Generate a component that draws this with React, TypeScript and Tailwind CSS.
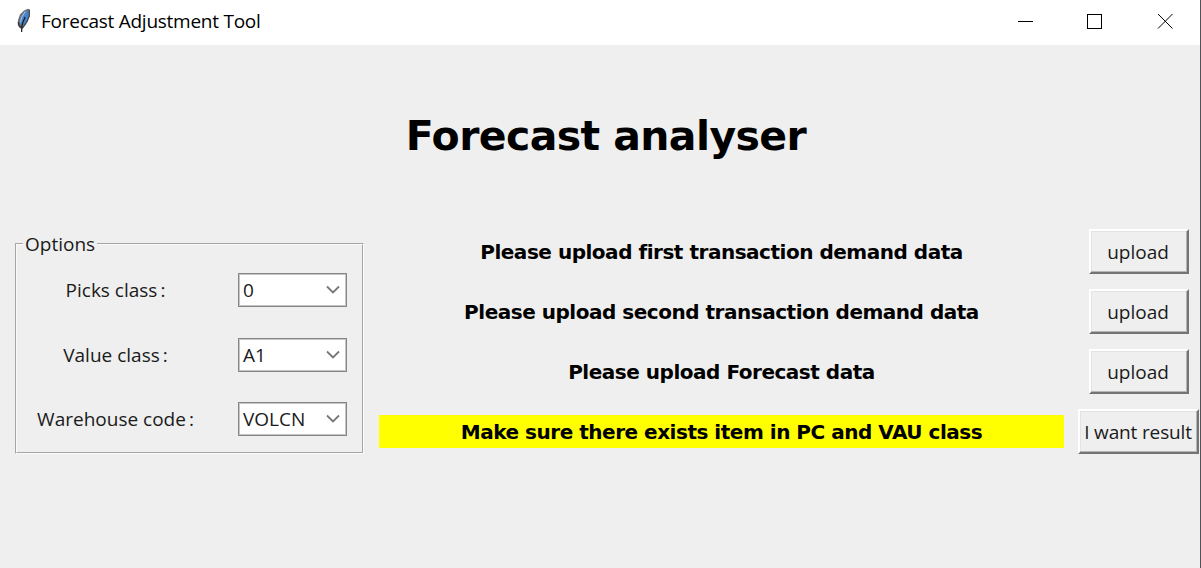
import React from "react";

function Feather() {
  return (
    <svg width="18" height="26" viewBox="0 0 18 26" className="block">
      <path d="M13 0.8 15 1.4 15 8 12.8 13.5 10 18 7.6 20.5 5 20.3 2.8 17 3 12 5 6.5 9 2.4Z" fill="#6b6d70" />
      <path d="M13 2.2 13.8 6 12.6 11 9.6 15.5 7 18 4.8 15 5.6 9.5 9 4.4Z" fill="#4384cf" />
      <path d="M10.5 3.4 6.8 9 5.4 14.5" stroke="#9fb9d6" strokeWidth="1.1" fill="none" />
      <path d="M14.4 2.5 14.2 8 11.6 14 8.8 18" stroke="#3d4147" strokeWidth="1" fill="none" />
      <path d="M10.2 9 8 14 6.9 18 6.6 24" stroke="#15181d" strokeWidth="1.2" fill="none" />
      <path d="M3.2 14 4.2 18 6.8 20.3 8.6 18.5" stroke="#333" strokeWidth="1.2" fill="none" />
    </svg>
  );
}

function TitleBar() {
  return (
    <header className="flex h-[45px] items-start bg-white">
      <div className="ml-[15px] mt-[8px] w-[26px]">
        <Feather />
      </div>
      <h1 className="mt-[8px] flex-1 whitespace-nowrap text-[19px] leading-[26px] tracking-[-0.26px]">Forecast Adjustment Tool</h1>
      <svg width="200" height="45" viewBox="0 0 200 45" className="block" fill="none" stroke="#000">
        <path d="M18 21.5H33" />
        <rect x="87.5" y="14.5" width="14" height="14" />
        <path d="M158 14 172.5 28.5M172.5 14 158 28.5" />
      </svg>
    </header>
  );
}

function OptionRow({ label, value }: { label: string; value: string }) {
  return (
    <div className="flex h-[34px] items-center">
      <div className="w-[197px] whitespace-nowrap text-center text-[19px] leading-[26px] text-[#1a1a1a]">
        {label}
        <span className="ml-[3px]">:</span>
      </div>
      <button className="ml-[24px] flex h-[34px] w-[109px] items-center justify-between border border-[#858585] bg-white pl-[4px] pr-[6px] text-left text-[19px] leading-[26px] text-[#1a1a1a] shadow-[inset_0_0_0_1px_#c6c6c6]">
        <span>{value}</span>
        <svg width="14" height="10" viewBox="0 0 14 10" fill="none" stroke="#777" strokeWidth="1.8">
          <path d="M1 1.5 7 7.5 13 1.5" />
        </svg>
      </button>
    </div>
  );
}

function Message({ text, tone }: { text: string; tone: string }) {
  return (
    <p className={`flex h-[33px] w-[685px] items-center justify-center whitespace-nowrap font-['DejaVu_Sans',sans-serif] text-[20px] font-bold tracking-[-0.48px] ${tone}`}>
      {text}
    </p>
  );
}

function PushButton({ text, size }: { text: string; size: string }) {
  return (
    <button className={`flex h-[45px] items-center justify-center whitespace-nowrap border-2 border-b-[#747474] border-l-white border-r-[#747474] border-t-white pr-px text-[19px] leading-[26px] text-[#1a1a1a] shadow-[inset_-1px_-1px_0_#b5b5b5,inset_1px_1px_0_#e3e3e3] ${size}`}>
      {text}
    </button>
  );
}

export default function App() {
  return (
    <div className="flex h-[568px] w-[1201px] flex-col overflow-hidden border-r border-[#4f5256] bg-[#efefef] font-['Open_Sans','Noto_Sans',sans-serif] text-black">
      <TitleBar />
      <h2 className="mt-[61px] h-[60px] w-[1212px] whitespace-nowrap text-center font-['DejaVu_Sans',sans-serif] text-[41px] font-bold leading-[60px] tracking-[-0.6px]">
        Forecast analyser
      </h2>
      <main className="mt-[63px] flex items-start">
        <fieldset className="ml-[15px] mt-[2px] h-[223px] w-[349px] border-2 border-[#fafafa] px-0 [border-style:groove]">
          <legend className="ml-[6px] h-[26px] px-[2px] text-[19px] leading-[26px] text-[#1a1a1a]">Options</legend>
          <div className="mt-[16px] flex flex-col gap-[30.5px]">
            <OptionRow label="Picks class" value="0" />
            <OptionRow label="Value class" value="A1" />
            <OptionRow label="Warehouse code" value="VOLCN" />
          </div>
        </fieldset>
        <div className="ml-[15px] flex flex-col gap-[27px] pt-[6px]">
          <Message text="Please upload first transaction demand data" tone="" />
          <Message text="Please upload second transaction demand data" tone="" />
          <Message text="Please upload Forecast data" tone="" />
          <Message text="Make sure there exists item in PC and VAU class" tone="bg-[#ffff00]" />
        </div>
        <div className="ml-[14px] flex w-[121px] flex-col items-center gap-[15px]">
          <PushButton text="upload" size="w-[100px]" />
          <PushButton text="upload" size="w-[100px]" />
          <PushButton text="upload" size="w-[100px]" />
          <PushButton text="I want result" size="w-[121px] tracking-[-0.15px]" />
        </div>
      </main>
    </div>
  );
}
